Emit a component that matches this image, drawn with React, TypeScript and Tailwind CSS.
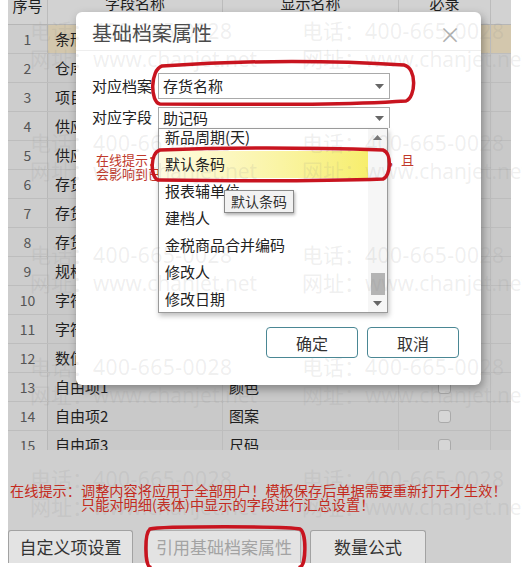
import React from "react";

type Row = { no: number; name: string; show: string };

const ROWS: Row[] = [
  { no: 1, name: "条形码", show: "条形码" },
  { no: 2, name: "仓库", show: "仓库" },
  { no: 3, name: "项目", show: "项目" },
  { no: 4, name: "供应商编码", show: "供应商编码" },
  { no: 5, name: "供应商名称", show: "供应商名称" },
  { no: 6, name: "存货编码", show: "存货编码" },
  { no: 7, name: "存货名称", show: "存货名称" },
  { no: 8, name: "存货分类", show: "存货分类" },
  { no: 9, name: "规格型号", show: "规格型号" },
  { no: 10, name: "字符1", show: "字符1" },
  { no: 11, name: "字符2", show: "字符2" },
  { no: 12, name: "数值1", show: "数值1" },
  { no: 13, name: "自由项1", show: "颜色" },
  { no: 14, name: "自由项2", show: "图案" },
  { no: 15, name: "自由项3", show: "尺码" },
];

const LIST_ITEMS = ["新品周期(天)", "默认条码", "报表辅单位", "建档人", "金税商品合并编码", "修改人", "修改日期"];

function Caret({ up = false }: { up?: boolean }) {
  return (
    <svg width="9" height="5" viewBox="0 0 9 5" className="block">
      {up ? <path d="M0 5 L4.5 0 L9 5 Z" fill="#777" /> : <path d="M0 0 L9 0 L4.5 5 Z" fill="#666" />}
    </svg>
  );
}

function Table() {
  return (
    <div className="h-[450px] shrink-0 overflow-hidden text-[15px] text-[#1e1e1e]">
      {/* 表头 */}
      <div className="grid h-[25px] grid-cols-[40px_175px_176px_92px_1fr] border-b border-[#b6b6b6] bg-[#d2d2d2] leading-[15px]">
        <div className="-mt-[2px] border-r border-[#bcbcbc] text-center">序号</div>
        <div className="-mt-[5px] border-r border-[#bcbcbc] text-center">字段名称</div>
        <div className="-mt-[5px] border-r border-[#bcbcbc] text-center">显示名称</div>
        <div className="-mt-[5px] border-r border-[#bcbcbc] text-center">必录</div>
        <div />
      </div>
      {ROWS.map((r) => {
        const hl = r.no === 1;
        const cellBg = hl ? "bg-[#d3c7ad]" : "bg-[#c9c9c9]";
        return (
          <div
            key={r.no}
            className="grid h-[29px] grid-cols-[40px_175px_176px_92px_1fr] border-b border-[#bdbdbd]"
          >
            <div className="flex items-center justify-center border-r border-[#b8b8b8] bg-[#cdcdcd] text-[14px] text-[#555]">
              {r.no}
            </div>
            <div className={["flex items-center border-r border-[#bdbdbd] pl-[7px]", cellBg].join(" ")}>
              {r.name}
            </div>
            <div className={["flex items-center border-r border-[#bdbdbd] pl-[6px]", cellBg].join(" ")}>
              {r.show}
            </div>
            <div className={["flex items-center justify-center border-r border-[#bdbdbd]", cellBg].join(" ")}>
              <span className="h-[13px] w-[13px] rounded-[3px] border border-[#aaa] bg-[#d6d6d6]" />
            </div>
            <div className={cellBg} />
          </div>
        );
      })}
    </div>
  );
}

function Dialog() {
  return (
    <div className="absolute left-[76px] top-[12px] h-[373px] w-[405px] rounded-[6px] bg-white shadow-[2px_4px_10px_rgba(0,0,0,0.35)]">
      {/* タイトル */}
      <div className="flex h-[39px] items-center justify-between border-b border-[#eeeeee] pl-[16px] pr-[20px] pt-[4px]">
        <span className="text-[20px] text-[#4a4a4a]">基础档案属性</span>
        <span className="text-[22px] leading-none text-[#b0b0b0]">×</span>
      </div>

      <div className="flex flex-col px-[16px] text-[15px] text-[#222]">
        <div className="mt-[22px] flex h-[26px] items-center">
          <span className="w-[66px]">对应档案</span>
          <div className="flex h-[26px] w-[232px] items-center justify-between border border-[#a9a9a9] pl-[4px] pr-[5px]">
            <span>存货名称</span>
            <Caret />
          </div>
        </div>
        <div className="mt-[8px] flex h-[21px] items-center">
          <span className="w-[66px]">对应字段</span>
          <div className="flex h-[21px] w-[232px] items-center justify-between border border-b-0 border-[#a9a9a9] pl-[4px] pr-[5px]">
            <span>助记码</span>
            <Caret />
          </div>
        </div>
        <div className="ml-[4px] mt-[25px] flex w-[318px] flex-col text-[13px] leading-[14px] text-[#c0392b]">
          <div className="flex justify-between">
            <span>在线提示：对应字段修改后只对新增单据生效</span>
            <span>，且</span>
          </div>
          <span>会影响到已经保存的单据。</span>
        </div>
        <div className="mt-[146px] flex justify-end gap-[9px] pr-[6px]">
          <button className="h-[31px] w-[92px] rounded-[4px] border border-[#4a8794] bg-white text-[16px] text-[#333]">
            确定
          </button>
          <button className="h-[31px] w-[92px] rounded-[4px] border border-[#4a8794] bg-white text-[16px] text-[#333]">
            取消
          </button>
        </div>
      </div>

      {/* ドロップダウン */}
      <div className="absolute left-[82px] top-[116px] flex h-[185px] w-[230px] border border-[#9a9a9a] bg-white text-[15px] text-[#222] shadow-[1px_3px_5px_rgba(0,0,0,0.25)]">
        <div className="flex-1 overflow-hidden">
          <div className="-mt-[5px] flex flex-col">
            {LIST_ITEMS.map((it) => (
              <div
                key={it}
                className={[
                  "flex h-[27px] items-center pl-[6px]",
                  it === "默认条码" ? "bg-gradient-to-r from-[#fffbe2] to-[#f7ee6c]" : "",
                ].join(" ")}
              >
                {it}
              </div>
            ))}
          </div>
        </div>
        <div className="flex w-[19px] flex-col items-center bg-[#f6f6f6] pb-[6px] pt-[6px]">
          <Caret up />
          <div className="flex-1" />
          <div className="mb-[6px] h-[22px] w-[14px] bg-[#b4b4b4]" />
          <Caret />
        </div>
      </div>

      {/* ツールチップ */}
      <div className="absolute left-[148px] top-[178px] flex h-[23px] items-center border border-[#8a8a8a] bg-[#f2f2f2] px-[6px] text-[14px] text-[#333] shadow-[1px_2px_3px_rgba(0,0,0,0.3)]">
        默认条码
      </div>
    </div>
  );
}

function Watermark() {
  const groups = [0, 1, 2, 3, 4];
  return (
    <div className="pointer-events-none absolute inset-0 flex flex-col gap-[56px] whitespace-nowrap pt-[17px] text-[21px] leading-[27px] text-[#8a8a8a]/15">
      {groups.map((g) => (
        <div key={g} className="flex flex-col">
          <div className="grid grid-cols-[272px_1fr] pl-[30px]">
            <span>电话：<span className="font-['Open_Sans',sans-serif] tracking-[0.5px]">400-665-0028</span></span>
            <span>电话：<span className="font-['Open_Sans',sans-serif] tracking-[0.5px]">400-665-0028</span></span>
          </div>
          <div className="grid grid-cols-[272px_1fr] pl-[30px]">
            <span>网址：<span className="font-['Open_Sans',sans-serif]">www.chanjet.net</span></span>
            <span>网址：<span className="font-['Open_Sans',sans-serif]">www.chanjet.net</span></span>
          </div>
        </div>
      ))}
    </div>
  );
}

function RedMarks() {
  return (
    <svg
      width="522"
      height="567"
      viewBox="0 0 522 567"
      className="pointer-events-none absolute left-0 top-0"
      fill="none"
      stroke="#c8141f"
      strokeWidth="3.5"
      strokeLinecap="round"
    >
      <path d="M162 66 C250 60 340 61 404 65 C417 68 416 97 406 101 C330 106 240 104 160 104 C150 102 150 70 162 66 Z" />
      <path d="M160 150 C240 147 320 148 383 150 C392 153 391 176 383 179 C300 182 230 181 158 180 C150 177 150 153 160 150 Z" />
      <path d="M150 529 C160 526 290 526 300 529 C307 533 306 566 300 567 M150 529 C144 534 145 566 150 567" />
    </svg>
  );
}

export default function App() {
  return (
    <div className="relative h-[567px] w-[522px] overflow-hidden bg-white font-['Noto_Sans_CJK_SC','Noto_Sans',sans-serif]">
      <div className="ml-[8px] mr-[11px] flex h-[563px] flex-col bg-[#cfcfcf]">
        <Table />
        {/* 下部 */}
        <div className="flex flex-col pt-[33px]">
          <div className="flex flex-col whitespace-nowrap pl-[2px] text-[14.2px] leading-[14px] text-[#c42b20]">
            <span>在线提示：调整内容将应用于全部用户！模板保存后单据需要重新打开才生效！</span>
            <span className="pl-[71px]">只能对明细(表体)中显示的字段进行汇总设置！</span>
          </div>
          <div className="mt-[19px] flex h-[33px] items-stretch">
            <button className="w-[125px] rounded-t-[3px] border border-b-0 border-[#a2a2a2] bg-[#e3e3e3] text-[17px] text-[#333]">
              自定义项设置
            </button>
            <button className="ml-[14px] w-[154px] rounded-t-[3px] border border-b-0 border-[#b0b0b0] bg-[#e3e3e3] text-[17px] text-[#a3a3a3]">
              引用基础档案属性
            </button>
            <button className="ml-[9px] w-[116px] rounded-t-[3px] border border-b-0 border-[#a2a2a2] bg-[#e3e3e3] text-[17px] text-[#333]">
              数量公式
            </button>
          </div>
        </div>
      </div>
      <Dialog />
      <Watermark />
      <RedMarks />
    </div>
  );
}
